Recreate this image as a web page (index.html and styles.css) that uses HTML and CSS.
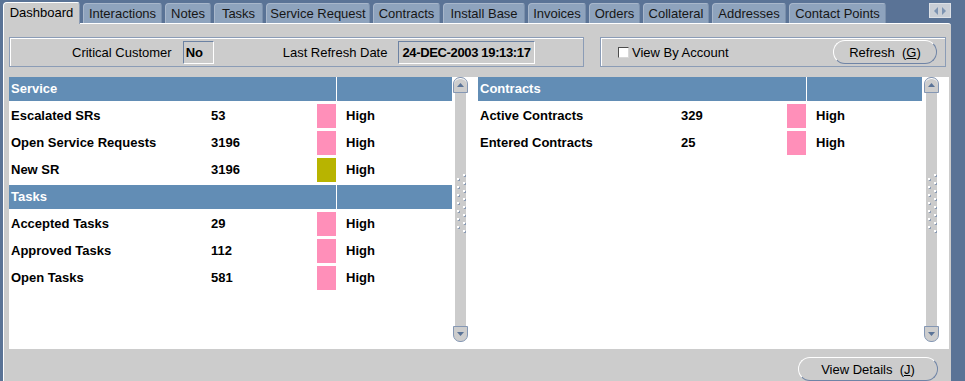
FILE: index.html
```html
<!DOCTYPE html>
<html lang="en">
<head>
    <meta charset="UTF-8">
    <title>Customer Dashboard</title>
    <link rel="stylesheet" href="styles.css">
</head>
<body>
    <div class="tabbar">
        <div class="tabs">
            <div class="tab active">Dashboard</div>
            <div class="tab">Interactions</div>
            <div class="tab">Notes</div>
            <div class="tab">Tasks</div>
            <div class="tab">Service Request</div>
            <div class="tab">Contracts</div>
            <div class="tab">Install Base</div>
            <div class="tab">Invoices</div>
            <div class="tab">Orders</div>
            <div class="tab">Collateral</div>
            <div class="tab">Addresses</div>
            <div class="tab">Contact Points</div>
        </div>
        <div class="tab-scroll">
            <svg width="12" height="8" viewBox="0 0 12 8"><path d="M4 0v8L0 4z M8 0v8l4-4z" fill="#7d93b2"/></svg>
        </div>
    </div>

    <div class="panel">
        <div class="summary">
            <div class="group group-info">
                <span class="label">Critical Customer</span>
                <div class="field field-short">No</div>
                <span class="label label-date">Last Refresh Date</span>
                <div class="field field-date">24-DEC-2003 19:13:17</div>
            </div>
            <div class="group group-actions">
                <label class="check"><span class="box"></span>View By Account</label>
                <button class="pill pill-refresh">Refresh&nbsp;&nbsp;(<u>G</u>)</button>
            </div>
        </div>

        <div class="content">
            <div class="pane">
                <div class="metrics metrics-left">
                    <div class="sec-title">Service</div><div class="sec-rest"></div>
                    <div class="name">Escalated SRs</div><div class="num">53</div><div class="swatch pink"></div><div class="level">High</div>
                    <div class="name">Open Service Requests</div><div class="num">3196</div><div class="swatch pink"></div><div class="level">High</div>
                    <div class="name">New SR</div><div class="num">3196</div><div class="swatch olive"></div><div class="level">High</div>
                    <div class="sec-title">Tasks</div><div class="sec-rest"></div>
                    <div class="name">Accepted Tasks</div><div class="num">29</div><div class="swatch pink"></div><div class="level">High</div>
                    <div class="name">Approved Tasks</div><div class="num">112</div><div class="swatch pink"></div><div class="level">High</div>
                    <div class="name">Open Tasks</div><div class="num">581</div><div class="swatch pink"></div><div class="level">High</div>
                </div>
                <div class="scrollbar">
                    <div class="sb-btn sb-up"><svg width="7" height="4" viewBox="0 0 7 4"><path d="M0 4L3.5 0 7 4z" fill="#5a7397"/></svg></div>
                    <div class="sb-track">
                        <svg width="11" height="59" viewBox="0 0 11 59">
                            <path transform="translate(1 1)" fill="#8c9cb4" d="M8 0h2v2H8z M2 4h2v2H2z M8 8h2v2H8z M2 12h2v2H2z M8 16h2v2H8z M2 20h2v2H2z M8 24h2v2H8z M2 28h2v2H2z M8 32h2v2H8z M2 36h2v2H2z M8 40h2v2H8z M2 44h2v2H2z M8 48h2v2H8z M2 52h2v2H2z M8 56h2v2H8z"/>
                            <path fill="#fff" d="M8 0h2v2H8z M2 4h2v2H2z M8 8h2v2H8z M2 12h2v2H2z M8 16h2v2H8z M2 20h2v2H2z M8 24h2v2H8z M2 28h2v2H2z M8 32h2v2H8z M2 36h2v2H2z M8 40h2v2H8z M2 44h2v2H2z M8 48h2v2H8z M2 52h2v2H2z M8 56h2v2H8z"/>
                        </svg>
                    </div>
                    <div class="sb-btn sb-down"><svg width="7" height="4" viewBox="0 0 7 4"><path d="M0 0L3.5 4 7 0z" fill="#5a7397"/></svg></div>
                </div>
            </div>

            <div class="pane pane-right">
                <div class="metrics metrics-right">
                    <div class="sec-title">Contracts</div><div class="sec-rest"></div>
                    <div class="name">Active Contracts</div><div class="num">329</div><div class="swatch pink"></div><div class="level">High</div>
                    <div class="name">Entered Contracts</div><div class="num">25</div><div class="swatch pink"></div><div class="level">High</div>
                </div>
                <div class="scrollbar">
                    <div class="sb-btn sb-up"><svg width="7" height="4" viewBox="0 0 7 4"><path d="M0 4L3.5 0 7 4z" fill="#5a7397"/></svg></div>
                    <div class="sb-track">
                        <svg width="11" height="59" viewBox="0 0 11 59">
                            <path transform="translate(1 1)" fill="#8c9cb4" d="M8 0h2v2H8z M2 4h2v2H2z M8 8h2v2H8z M2 12h2v2H2z M8 16h2v2H8z M2 20h2v2H2z M8 24h2v2H8z M2 28h2v2H2z M8 32h2v2H8z M2 36h2v2H2z M8 40h2v2H8z M2 44h2v2H2z M8 48h2v2H8z M2 52h2v2H2z M8 56h2v2H8z"/>
                            <path fill="#fff" d="M8 0h2v2H8z M2 4h2v2H2z M8 8h2v2H8z M2 12h2v2H2z M8 16h2v2H8z M2 20h2v2H2z M8 24h2v2H8z M2 28h2v2H2z M8 32h2v2H8z M2 36h2v2H2z M8 40h2v2H8z M2 44h2v2H2z M8 48h2v2H8z M2 52h2v2H2z M8 56h2v2H8z"/>
                        </svg>
                    </div>
                    <div class="sb-btn sb-down"><svg width="7" height="4" viewBox="0 0 7 4"><path d="M0 0L3.5 4 7 0z" fill="#5a7397"/></svg></div>
                </div>
            </div>
        </div>

        <div class="footer">
            <button class="pill pill-details">View Details&nbsp;&nbsp;(<u>J</u>)</button>
        </div>
    </div>
</body>
</html>
```

FILE: styles.css
```css
body {
    margin: 0;
    width: 965px;
    height: 381px;
    overflow: hidden;
    background: #5a7396;
    font-family: "Liberation Sans", Arial, sans-serif;
    font-size: 13px;
    color: #000;
}

/* tab strip */
.tabbar {
    display: flex;
    align-items: flex-end;
    height: 23px;
}
.tabs {
    display: flex;
    align-items: flex-end;
    gap: 3px;
    padding-left: 3px;
}
.tab {
    box-sizing: border-box;
    height: 20px;
    line-height: 19px;
    text-align: center;
    white-space: nowrap;
    background: #8ea3bd;
    color: #161616;
    border-top: 1px solid #a8b7cb;
    border-left: 1px solid #a8b7cb;
    border-right: 1px solid #7a8fab;
    border-radius: 4px 3px 0 0;
}
.tab.active {
    position: relative;
    height: 22px;
    line-height: 20px;
    margin-bottom: -1px;
    background: #cccccc;
    color: #000;
    border-top-color: #fff;
    border-left-color: #fff;
    border-right-color: #8c9cb4;
}
.tab:nth-child(1) { width: 77px; }
.tab:nth-child(2) { width: 79px; }
.tab:nth-child(3) { width: 46px; }
.tab:nth-child(4) { width: 49px; }
.tab:nth-child(5) { width: 104px; }
.tab:nth-child(6) { width: 67px; }
.tab:nth-child(7) { width: 82px; }
.tab:nth-child(8) { width: 58px; }
.tab:nth-child(9) { width: 51px; }
.tab:nth-child(10) { width: 66px; }
.tab:nth-child(11) { width: 74px; }
.tab:nth-child(12) { width: 97px; }

.tab-scroll {
    align-self: flex-start;
    box-sizing: border-box;
    width: 22px;
    height: 15px;
    margin: 3px 14px 0 auto;
    background: #c9ced6;
    border: 1px solid #dde1e7;
    display: flex;
    align-items: center;
    justify-content: center;
}

/* main panel */
.panel {
    box-sizing: border-box;
    width: 948px;
    height: 358px;
    margin-left: 3px;
    background: #cccccc;
    border-top: 1px solid #fff;
    border-left: 1px solid #fff;
    border-top-right-radius: 3px;
}
.summary {
    display: flex;
    gap: 16px;
    padding: 13px 5px 0 5px;
}
.group {
    box-sizing: border-box;
    height: 30px;
    display: flex;
    align-items: center;
    border: 1px solid #8b9cb6;
    box-shadow: inset 1px 1px 0 #fff;
}
.group-info {
    width: 575px;
    padding-left: 62px;
}
.group-actions {
    flex: 1;
    padding: 0 8px 0 17px;
}
.label {
    white-space: nowrap;
}
.label-date {
    margin-left: 69px;
}
.field {
    box-sizing: border-box;
    height: 23px;
    line-height: 21px;
    margin-left: 11px;
    padding-left: 2px;
    font-weight: bold;
    white-space: nowrap;
    background: #cccccc;
    border-top: 1px solid #6c82a3;
    border-left: 1px solid #6c82a3;
    border-right: 1px solid #fff;
    border-bottom: 1px solid #fff;
}
.field-short {
    width: 31px;
}
.field-date {
    width: 137px;
    padding-left: 3px;
    letter-spacing: -0.35px;
}
.check {
    display: flex;
    align-items: center;
    gap: 3px;
}
.box {
    box-sizing: border-box;
    width: 11px;
    height: 11px;
    background: #fff;
    border: 1px solid;
    border-color: #4d4d4d #d8d8d8 #d8d8d8 #4d4d4d;
}
.pill {
    box-sizing: border-box;
    height: 24px;
    padding: 0;
    background: #cccccc;
    color: #000;
    font-family: inherit;
    font-size: 13px;
    border: 1px solid;
    border-color: #fff #6f84a6 #6f84a6 #fff;
    border-radius: 12px;
}
.pill-refresh {
    width: 104px;
    margin-left: auto;
}
.pill-details {
    width: 140px;
}

/* dashboard tables */
.content {
    display: flex;
    width: 940px;
    height: 272px;
    margin: 10px 0 0 5px;
    background: #fff;
}
.pane {
    display: flex;
}
.pane-right {
    margin-left: 10px;
}
.metrics {
    display: grid;
    grid-auto-rows: 24px;
    row-gap: 3px;
    align-content: start;
    line-height: 24px;
    font-weight: bold;
    white-space: nowrap;
}
.metrics-left { grid-template-columns: 200px 108px 19px 1px 115px; }
.metrics-right { grid-template-columns: 201px 108px 19px 1px 115px; }
.sec-title {
    grid-column: 1 / span 3;
    padding-left: 2px;
    background: #628db5;
    color: #fff;
}
.sec-rest {
    grid-column: 5;
    background: #628db5;
}
.name, .num {
    padding-left: 2px;
}
.swatch { grid-column: 3; }
.pink { background: #ff8fb9; }
.olive { background: #b8b400; }
.level {
    grid-column: 5;
    padding-left: 9px;
}

/* scroll bars */
.scrollbar {
    display: flex;
    flex-direction: column;
    width: 15px;
    margin: 0 0 7px 1px;
}
.pane-right .scrollbar {
    margin-left: 2px;
}
.sb-btn {
    box-sizing: border-box;
    height: 16px;
    display: flex;
    align-items: center;
    justify-content: center;
    background: #cdcdcd;
    border: 1px solid #8497b4;
}
.sb-up {
    border-radius: 7px 7px 0 0;
    box-shadow: inset 0 1px 0 #fff;
}
.sb-down {
    border-radius: 0 0 7px 7px;
}
.sb-track {
    flex: 1;
    margin: 0 2px;
    padding-bottom: 13px;
    background: #cccccc;
    display: flex;
    align-items: center;
    justify-content: center;
}

.footer {
    display: flex;
    justify-content: flex-end;
    padding: 8px 13px 0 0;
}
```
